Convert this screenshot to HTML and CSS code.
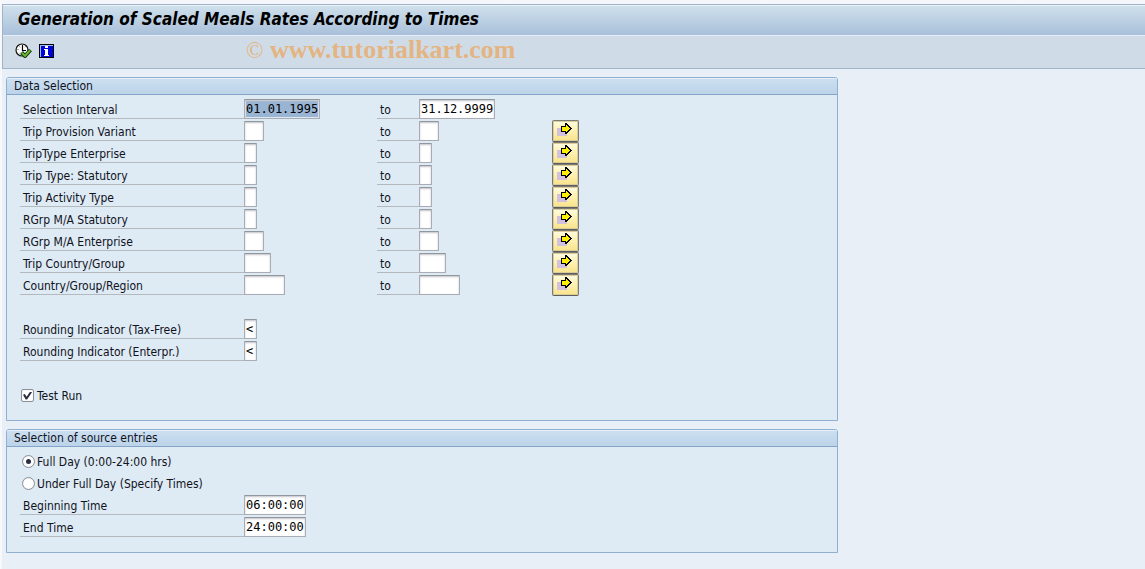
FILE: index.html
```html
<!DOCTYPE html>
<html lang="en">
<head>
<meta charset="utf-8">
<title>Generation of Scaled Meals Rates According to Times</title>
<link rel="stylesheet" href="styles.css">
</head>
<body>
<svg width="0" height="0" class="defs" aria-hidden="true">
  <symbol id="multi" viewBox="0 0 15 13" shape-rendering="crispEdges">
    <path fill="#d2c0df" d="M0 5h10v8H0z"/>
    <path fill="#000" d="M8 0h2v1h1v1h1v1h1v1h1v1h1v1h-1v1h-1v1h-1v1h-1v1h-1v1H8V9H4V3h4z"/>
    <path fill="#fff000" d="M9 2h1v1h1v1h1v1h1v1h-1v1h-1v1h-1v1H9V8H5V4h4z"/>
  </symbol>
</svg>
<header class="head">
  <h1 class="title">Generation of Scaled Meals Rates According to Times</h1>
  <div class="toolbar">
    <button class="tool" type="button" aria-label="Execute">
      <svg width="17" height="15" viewBox="0 0 17 15">
        <circle cx="7" cy="7" r="6" fill="#fff" stroke="#111" stroke-width="1.2"/>
        <path d="M7.5 2v5.5H11" fill="none" stroke="#000" stroke-width="1.2"/>
        <path d="M2.5 6.5h1M4.5 3.5l.7.7M10.5 3.5l-.7.7M4.3 10.3l.7-.7" stroke="#555" fill="none"/>
        <path d="M6.5 9.5l3.5 3.5 5.5-6" fill="none" stroke="#173c0d" stroke-width="4"/>
        <path d="M7 9.9l3 3 5-5.6" fill="none" stroke="#6cbf36" stroke-width="2"/>
      </svg>
    </button>
    <button class="tool" type="button" aria-label="Information">
      <svg width="15" height="14" viewBox="0 0 15 14" shape-rendering="crispEdges">
        <path fill="#000" d="M0 0h15v14H0z"/>
        <path fill="#8cc0ff" d="M1 1h13v1H2v11H1z"/>
        <path fill="#0000d8" d="M2 2h12v11H2z"/>
        <path fill="#fff" d="M6 2h3v2H6zM5 5h4v6h1v1H5v-1h1V6H5z"/>
      </svg>
    </button>
    <span class="mark"><span class="copy">©</span> www.tutorialkart.com</span>
  </div>
</header>
<main class="main">
  <section class="panel">
    <h2 class="caption">Data Selection</h2>
    <div class="rows">
      <div class="row"><label class="name" for="a0">Selection Interval</label><input class="field w10 marked" id="a0" value="01.01.1995"><label class="to" for="b0">to</label><input class="field w10" id="b0" value="31.12.9999"></div>
      <div class="row"><label class="name" for="a1">Trip Provision Variant</label><input class="field w2" id="a1"><label class="to" for="b1">to</label><input class="field w2" id="b1"><button class="more" type="button" aria-label="Multiple selection"><svg width="15" height="13"><use href="#multi"/></svg></button></div>
      <div class="row"><label class="name" for="a2">TripType Enterprise</label><input class="field w1" id="a2"><label class="to" for="b2">to</label><input class="field w1" id="b2"><button class="more" type="button" aria-label="Multiple selection"><svg width="15" height="13"><use href="#multi"/></svg></button></div>
      <div class="row"><label class="name" for="a3">Trip Type: Statutory</label><input class="field w1" id="a3"><label class="to" for="b3">to</label><input class="field w1" id="b3"><button class="more" type="button" aria-label="Multiple selection"><svg width="15" height="13"><use href="#multi"/></svg></button></div>
      <div class="row"><label class="name" for="a4">Trip Activity Type</label><input class="field w1" id="a4"><label class="to" for="b4">to</label><input class="field w1" id="b4"><button class="more" type="button" aria-label="Multiple selection"><svg width="15" height="13"><use href="#multi"/></svg></button></div>
      <div class="row"><label class="name" for="a5">RGrp M/A Statutory</label><input class="field w1" id="a5"><label class="to" for="b5">to</label><input class="field w1" id="b5"><button class="more" type="button" aria-label="Multiple selection"><svg width="15" height="13"><use href="#multi"/></svg></button></div>
      <div class="row"><label class="name" for="a6">RGrp M/A Enterprise</label><input class="field w2" id="a6"><label class="to" for="b6">to</label><input class="field w2" id="b6"><button class="more" type="button" aria-label="Multiple selection"><svg width="15" height="13"><use href="#multi"/></svg></button></div>
      <div class="row"><label class="name" for="a7">Trip Country/Group</label><input class="field w3" id="a7"><label class="to" for="b7">to</label><input class="field w3" id="b7"><button class="more" type="button" aria-label="Multiple selection"><svg width="15" height="13"><use href="#multi"/></svg></button></div>
      <div class="row"><label class="name" for="a8">Country/Group/Region</label><input class="field w5" id="a8"><label class="to" for="b8">to</label><input class="field w5" id="b8"><button class="more" type="button" aria-label="Multiple selection"><svg width="15" height="13"><use href="#multi"/></svg></button></div>
    </div>
    <div class="rows">
      <div class="row"><label class="name" for="r1">Rounding Indicator (Tax-Free)</label><input class="field w1" id="r1" value="&lt;"></div>
      <div class="row"><label class="name" for="r2">Rounding Indicator (Enterpr.)</label><input class="field w1" id="r2" value="&lt;"></div>
    </div>
    <div class="rows">
      <label class="choice"><input class="check" type="checkbox" checked>Test Run</label>
    </div>
  </section>
  <section class="panel">
    <h2 class="caption">Selection of source entries</h2>
    <div class="rows">
      <label class="choice"><input class="radio" type="radio" name="day" checked>Full Day (0:00-24:00 hrs)</label>
      <label class="choice"><input class="radio" type="radio" name="day">Under Full Day (Specify Times)</label>
      <div class="row"><label class="name" for="t1">Beginning Time</label><input class="field w8" id="t1" value="06:00:00"></div>
      <div class="row"><label class="name" for="t2">End Time</label><input class="field w8" id="t2" value="24:00:00"></div>
    </div>
  </section>
</main>
</body>
</html>
```
FILE: styles.css
```css
* { box-sizing: border-box; }
html { min-height: 100%; background: #e8eff6; }
body {
  margin: 0;
  min-height: 100vh;
  padding-top: 4px;
  border-left: 2px solid #f6f8fc;
  background: linear-gradient(#f4f6fb 4px, transparent 4px);
  color: #10121c;
  font: 12px/16px "DejaVu Sans Condensed", "DejaVu Sans", sans-serif;
  font-stretch: condensed;
}
.defs { position: absolute; }
.head {
  border: solid #9fb3cb;
  border-width: 1px 0 1px 1px;
  background: #cfdce7;
}
.title {
  margin: 0;
  height: 31px;
  padding: 0 15px;
  border-top: 1px solid #e8f2f8;
  border-bottom: 1px solid #e6eff7;
  background: linear-gradient(#cfe0ec, #a9c0da);
  color: #000;
  font-size: 17px;
  line-height: 26px;
  font-style: italic;
  font-weight: bold;
}
.toolbar {
  display: flex;
  align-items: center;
  gap: 7px;
  height: 32px;
  padding: 0 12px 3px;
}
.tool {
  display: flex;
  padding: 0;
  border: 0;
  background: none;
}
.mark {
  padding-left: 185px;
  color: #e4b483;
  font: bold 26px/28px "Liberation Serif", serif;
}
.copy { font-size: 23px; font-weight: normal; }
.main {
  display: flex;
  flex-direction: column;
  gap: 8px;
  max-width: 836px;
  padding: 8px 0 16px 4px;
}
.panel {
  padding-bottom: 14px;
  border: 1px solid #8fafd0;
  border-radius: 3px 3px 0 0;
  background: #deeaf4;
}
.caption {
  margin: 0 0 3px;
  height: 17px;
  padding: 0 7px;
  border-top: 1px solid #e6f0f8;
  border-bottom: 1px solid #84a4ca;
  border-radius: 2px 2px 0 0;
  background: linear-gradient(#cbdff0, #bcd3e9);
  font-size: 12px;
  line-height: 15px;
  font-weight: normal;
}
.rows { padding-left: 13px; }
.rows + .rows { padding-top: 22px; }
.row {
  display: grid;
  grid-template-columns: 224px 133px 42px 133px 27px;
  align-items: center;
  height: 22px;
}
.name, .to {
  height: 20px;
  padding: 3px 3px 0;
  border-bottom: 1px solid #b4b9bd;
}
.field {
  height: 20px;
  padding: 1px;
  border: 1px solid #a9acb2;
  border-top-color: #92969d;
  border-radius: 1px;
  outline: 0;
  background: #fff;
  box-shadow: inset 0 1px 2px #c0c3ca;
  color: #000;
  font: 12px/14px "DejaVu Sans Mono", monospace;
}
.marked { background: linear-gradient(#9ab4d3, #9ab4d3) content-box #fff; }
.w1 { width: 13px; }
.w2 { width: 20px; }
.w3 { width: 27px; }
.w5 { width: 41px; }
.w8 { width: 62px; }
.w10 { width: 76px; }
.more {
  display: flex;
  align-items: center;
  justify-content: center;
  height: 22px;
  padding: 0 2px 3px 0;
  border: 1px solid #7c7a74;
  border-bottom-color: #5d5d5d;
  border-radius: 2px;
  background: linear-gradient(#fffbe0, #fdeea8 60%, #f8e28a);
  box-shadow: inset 0 0 0 1px #d9cc98;
}
.choice {
  display: flex;
  align-items: center;
  gap: 3px;
  height: 22px;
  padding-top: 1px;
}
.check, .radio {
  appearance: none;
  display: grid;
  place-items: center;
  width: 13px;
  height: 13px;
  margin: 0 0 0 1px;
  border: 1px solid #8b9097;
  background: #fff;
  box-shadow: inset 0 0 1px #c4c8d0;
}
.radio { border-radius: 50%; margin-left: 2px; }
.choice:has(.radio) { gap: 2px; }
.check { border-radius: 2px; }
.radio:checked::before {
  content: "";
  width: 5px;
  height: 5px;
  border-radius: 50%;
  background: #2c2d44;
}
.check:checked::before {
  content: "";
  width: 9px;
  height: 8px;
  background: #2c2d44;
  clip-path: polygon(0 40%, 20% 30%, 40% 65%, 80% 0, 100% 10%, 45% 100%, 30% 100%);
}
```
